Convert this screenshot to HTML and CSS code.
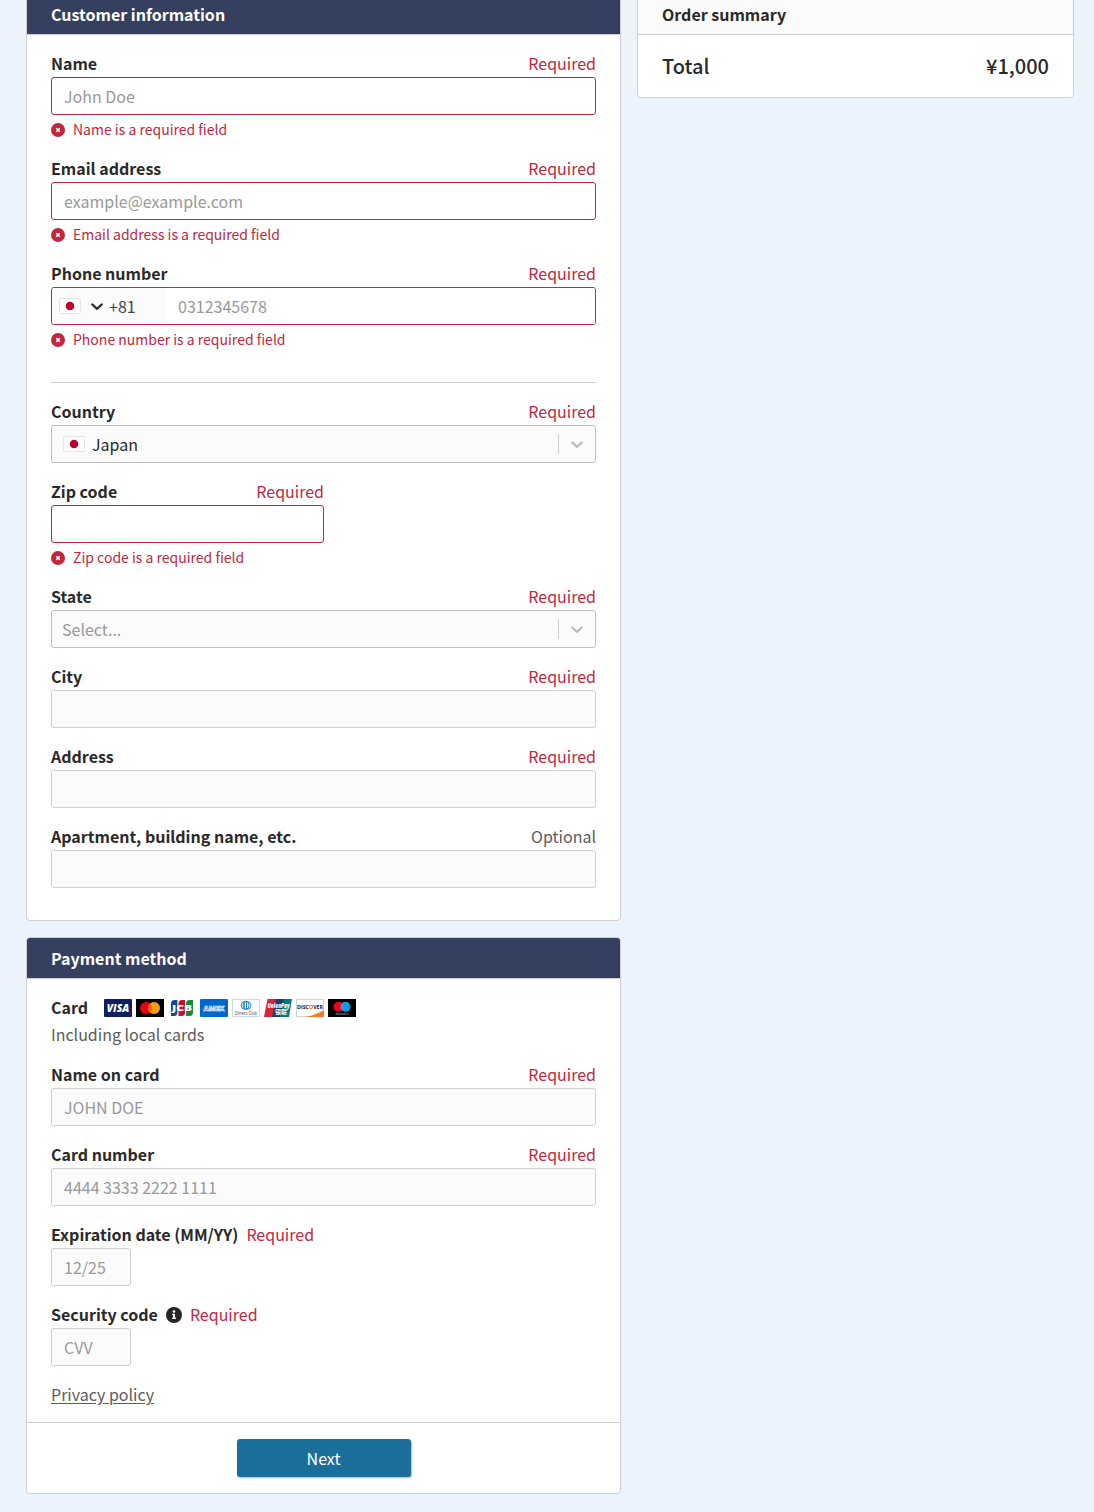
FILE: index.html
```
<!DOCTYPE html>
<html lang="en">
<head>
<meta charset="utf-8">
<title>Checkout</title>
<link rel="stylesheet" href="styles.css">
</head>
<body>
<svg width="0" height="0" class="sprite" aria-hidden="true">
  <symbol id="error" viewBox="0 0 14 14"><circle cx="7" cy="7" r="7" fill="#c1273f"/><path d="M5.3 5.3l3.4 3.4M8.7 5.3L5.3 8.7" stroke="#fff" stroke-width="1.6"/></symbol>
  <symbol id="japan" viewBox="0 0 22 16"><rect x=".5" y=".5" width="21" height="15" rx="1" fill="#fff" stroke="#e4e4e4"/><circle cx="11" cy="8" r="4.3" fill="#bc002d"/></symbol>
  <symbol id="chevron" viewBox="0 0 12 8"><path d="M1.2 1.4L6 5.9l4.8-4.5" fill="none" stroke="currentColor" stroke-width="2.2" stroke-linecap="round" stroke-linejoin="round"/></symbol>
</svg>
<main class="page">
  <form class="column">
    <section class="panel">
      <h2 class="panel-header dark">Customer information</h2>
      <div class="panel-body customer">
        <div class="field">
          <div class="label-row"><label>Name</label><span class="required">Required</span></div>
          <input class="control invalid" placeholder="John Doe">
          <p class="error"><svg class="error-icon"><use href="#error"/></svg>Name is a required field</p>
        </div>
        <div class="field">
          <div class="label-row"><label>Email address</label><span class="required">Required</span></div>
          <input class="control invalid" placeholder="example@example.com">
          <p class="error"><svg class="error-icon"><use href="#error"/></svg>Email address is a required field</p>
        </div>
        <div class="field">
          <div class="label-row"><label>Phone number</label><span class="required">Required</span></div>
          <div class="control invalid phone">
            <div class="dial"><svg class="flag"><use href="#japan"/></svg><svg class="dial-chevron"><use href="#chevron"/></svg><span>+81</span></div>
            <input class="phone-input" placeholder="0312345678">
          </div>
          <p class="error"><svg class="error-icon"><use href="#error"/></svg>Phone number is a required field</p>
        </div>
        <hr class="divider">
        <div class="field">
          <div class="label-row"><label>Country</label><span class="required">Required</span></div>
          <div class="control select"><svg class="flag"><use href="#japan"/></svg><span class="select-value">Japan</span><span class="indicator"><svg class="select-chevron"><use href="#chevron"/></svg></span></div>
        </div>
        <div class="field half">
          <div class="label-row"><label>Zip code</label><span class="required">Required</span></div>
          <input class="control invalid">
          <p class="error"><svg class="error-icon"><use href="#error"/></svg>Zip code is a required field</p>
        </div>
        <div class="field">
          <div class="label-row"><label>State</label><span class="required">Required</span></div>
          <div class="control select"><span class="select-placeholder">Select...</span><span class="indicator"><svg class="select-chevron"><use href="#chevron"/></svg></span></div>
        </div>
        <div class="field">
          <div class="label-row"><label>City</label><span class="required">Required</span></div>
          <input class="control">
        </div>
        <div class="field">
          <div class="label-row"><label>Address</label><span class="required">Required</span></div>
          <input class="control">
        </div>
        <div class="field">
          <div class="label-row"><label>Apartment, building name, etc.</label><span class="optional">Optional</span></div>
          <input class="control">
        </div>
      </div>
    </section>

    <section class="panel">
      <h2 class="panel-header dark">Payment method</h2>
      <div class="panel-body payment">
        <div class="card-intro">
          <div class="card-row">
            <span class="card-title">Card</span>
            <div class="brands">
              <svg viewBox="0 0 28 18"><rect width="28" height="18" rx="1" fill="#101f5f"/><text x="14" y="12.9" class="logo" font-size="10.5" font-style="italic" fill="#fff" textLength="22.5" lengthAdjust="spacingAndGlyphs">VISA</text></svg>
              <svg viewBox="0 0 28 18"><rect width="28" height="18"/><circle cx="10" cy="9" r="6" fill="#eb001b"/><circle cx="18" cy="9" r="6" fill="#f79e1b"/><path d="M14 4.5a6 6 0 0 1 0 9a6 6 0 0 1 0-9z" fill="#ff5f00"/></svg>
              <svg viewBox="0 0 28 18"><path d="M3 4.5Q3 1 6.500 1H9.400V13.500Q9.400 17 6 17H3z" fill="#0e4c96"/><path d="M10.500 4.500Q10.500 1 14 1H17V13.500Q17 17 13.500 17H10.500z" fill="#c8102e"/><path d="M18.100 4.500Q18.100 1 21.500 1H25V13.500Q25 17 21.500 17H18.100z" fill="#168a35"/><text x="14" y="11.900" class="logo" font-size="8" fill="#fff" textLength="20" lengthAdjust="spacingAndGlyphs">JCB</text></svg>
              <svg viewBox="0 0 28 18"><rect width="28" height="18" rx="1" fill="#0068cb"/><text x="14" y="11.500" class="logo" font-size="6.500" fill="#0068cb" stroke="#fff" stroke-width=".6" textLength="21" lengthAdjust="spacingAndGlyphs">AMEX</text></svg>
              <svg viewBox="0 0 28 18"><rect x=".5" y=".5" width="27" height="17" fill="#fff" stroke="#c9dce8"/><circle cx="13.200" cy="6.300" r="4" fill="#fff" stroke="#147ab8"/><circle cx="15" cy="6.300" r="4" fill="none" stroke="#147ab8" stroke-width=".8"/><path d="M12.200 3.500v5.600M14.500 3.500v5.600" stroke="#147ab8" stroke-width="1.100"/><text x="14" y="15.500" class="logo thin" font-size="4.800" fill="#444" textLength="22" lengthAdjust="spacingAndGlyphs">Diners Club</text></svg>
              <svg viewBox="0 0 28 18"><path d="M3.500 0H13L9 18H0z" fill="#d9233a"/><path d="M12 0H21L17 18H8z" fill="#16416c"/><path d="M20 0H28L25 18H16z" fill="#087b7c"/><text x="14.500" y="8.500" class="logo" font-size="6" font-style="italic" fill="#fff" textLength="22" lengthAdjust="spacingAndGlyphs">UnionPay</text><text x="17" y="14.800" class="logo cjk" font-size="6" fill="#fff" textLength="12" lengthAdjust="spacingAndGlyphs">银联</text></svg>
              <svg viewBox="0 0 28 18"><rect x=".5" y=".5" width="27" height="17" fill="#fff" stroke="#d5d5d5"/><path d="M28 11v7H9Q21 15.500 28 11z" fill="#f47b20"/><text x="14" y="9.800" class="logo disc" font-size="5.800" fill="#222" textLength="26" lengthAdjust="spacingAndGlyphs">DISC<tspan fill="#f05a22">O</tspan>VER</text></svg>
              <svg viewBox="0 0 28 18"><rect width="28" height="18"/><circle cx="10.500" cy="7.700" r="5" fill="#eb001b"/><circle cx="17.500" cy="7.700" r="5" fill="#00a2e5"/><path d="M14 4.100a5 5 0 0 1 0 7.200a5 5 0 0 1 0-7.200z" fill="#7375cf"/><text x="14" y="16" class="logo thin" font-size="3.300" fill="#ccc" textLength="13" lengthAdjust="spacingAndGlyphs">maestro</text></svg>
            </div>
          </div>
          <p class="note">Including local cards</p>
        </div>
        <div class="field">
          <div class="label-row"><label>Name on card</label><span class="required">Required</span></div>
          <input class="control" placeholder="JOHN DOE">
        </div>
        <div class="field">
          <div class="label-row"><label>Card number</label><span class="required">Required</span></div>
          <input class="control" placeholder="4444 3333 2222 1111">
        </div>
        <div class="field">
          <div class="label-row inline"><label>Expiration date (MM/YY)</label><span class="required">Required</span></div>
          <input class="control short" placeholder="12/25">
        </div>
        <div class="field">
          <div class="label-row inline"><label>Security code</label><svg class="info" viewBox="0 0 16 16"><circle cx="8" cy="8" r="8" fill="#262626"/><circle cx="8" cy="4.500" r="1.350" fill="#fff"/><path d="M6.100 6.700H9v4h1V12H6v-1.300h1V8h-.9z" fill="#fff"/></svg><span class="required">Required</span></div>
          <input class="control short" placeholder="CVV">
        </div>
        <div class="privacy"><a href="#">Privacy policy</a></div>
      </div>
      <div class="panel-footer"><button type="button" class="next">Next</button></div>
    </section>
  </form>

  <aside class="panel summary">
    <h2 class="panel-header light">Order summary</h2>
    <div class="total"><span>Total</span><span>¥1,000</span></div>
  </aside>
</main>
</body>
</html>
```
FILE: styles.css
```
* { box-sizing: border-box; }
html { overflow: hidden; }
body {
  margin: 0;
  background: #ebf3fc;
  color: #292929;
  font: 16px/24px "Noto Sans CJK JP", "Noto Sans", sans-serif;
  height: 1512px;
  overflow: hidden;
}
h2, p { margin: 0; }
input, button { font: inherit; }
.sprite { display: block; }

.page {
  display: grid;
  grid-template-columns: 595px 437px;
  gap: 16px;
  align-items: start;
  margin: -7px 0 0 26px;
}
.column { display: flex; flex-direction: column; gap: 16px; }
.panel { background: #fff; border: 1px solid #cfcfcf; border-radius: 4px; overflow: hidden; }
.panel-header {
  height: 41px;
  padding: 8px 24px 0;
  border-bottom: 1px solid #cfcfcf;
  font-size: 16px;
  line-height: 24px;
  font-weight: 700;
}
.dark { background: #353f5f; color: #fff; }
.light { background: #fbfbfb; }
.panel-body { display: flex; flex-direction: column; gap: 18px; padding: 18px 24px 32px; }

.label-row { display: flex; justify-content: space-between; height: 24px; line-height: 20px; }
.label-row label, .card-title { font-weight: 700; }
.label-row.inline { justify-content: flex-start; gap: 8px; }
.required { color: #c1273f; }
.optional, .note { color: #5c5c5c; }

.control {
  display: block;
  width: 100%;
  height: 38px;
  padding: 0 12px;
  background: #fbfbfb;
  border: 1px solid #cfcfcf;
  border-radius: 3px;
  color: #292929;
}
.control.invalid { background: #fff; border-color: #c1273f; }
.control.short { width: 80px; }
input::placeholder { color: #999; opacity: 1; }
.half { width: 273px; }

.error {
  display: flex;
  gap: 8px;
  height: 25px;
  padding-top: 4px;
  color: #c1273f;
  font-size: 14px;
  line-height: 20px;
}
.error-icon { width: 14px; height: 14px; margin-top: 4px; }

.flag { width: 22px; height: 16px; flex: none; }
.phone { display: flex; padding: 0; overflow: hidden; }
.dial { display: flex; align-items: center; width: 114px; padding-left: 7px; background: #fbfbfb; color: #444; }
.dial span { margin-left: 6px; }
.dial-chevron { width: 12px; height: 8px; margin: 2px 0 0 10px; color: #333; }
.phone-input { flex: 1; min-width: 0; border: 0; padding: 0 12px; background: #fff; }

.divider { width: 100%; height: 1px; margin: 14px 0 0; border: 0; background: #cfcfcf; }

.select { display: flex; align-items: center; padding: 0 0 0 10px; border-color: #bfbfbf; }
.select .flag { margin: 0 7px 0 1px; }
.select-placeholder { color: #999; }
.indicator {
  display: flex;
  align-items: center;
  justify-content: center;
  width: 37px;
  height: 20px;
  margin-left: auto;
  border-left: 1px solid #ccc;
}
.select-chevron { width: 12px; height: 8px; margin-top: 2px; color: #bfbfbf; }

.payment { padding-bottom: 14px; }
.card-intro { height: 67px; margin-bottom: -18px; }
.card-row { display: flex; gap: 16px; height: 24px; line-height: 20px; }
.brands { display: flex; gap: 4px; padding-top: 2px; }
.brands svg { width: 28px; height: 18px; }
.logo { font-family: "Open Sans", sans-serif; font-weight: 800; text-anchor: middle; }
.logo.thin { font-weight: 400; }
.logo.disc { font-weight: 700; }
.logo.cjk { font-family: "Noto Sans CJK SC", sans-serif; font-weight: 700; }
.note { padding-top: 1px; }
.info { width: 16px; height: 16px; margin-top: 3px; }
.privacy { height: 24px; line-height: 20px; }
.privacy a { color: #5c5c5c; text-underline-offset: 2px; }
.panel-footer { display: flex; justify-content: center; padding: 16px; border-top: 1px solid #cfcfcf; }
.next {
  width: 174px;
  height: 38px;
  padding: 0;
  border: 0;
  border-radius: 3px;
  background: #1c6f9b;
  color: #fff;
  box-shadow: 1px 1px 2px rgba(0, 0, 0, .3);
}
.total { display: flex; justify-content: space-between; height: 62px; padding: 16px 24px; font-size: 20px; line-height: 30px; font-weight: 500; }
```
